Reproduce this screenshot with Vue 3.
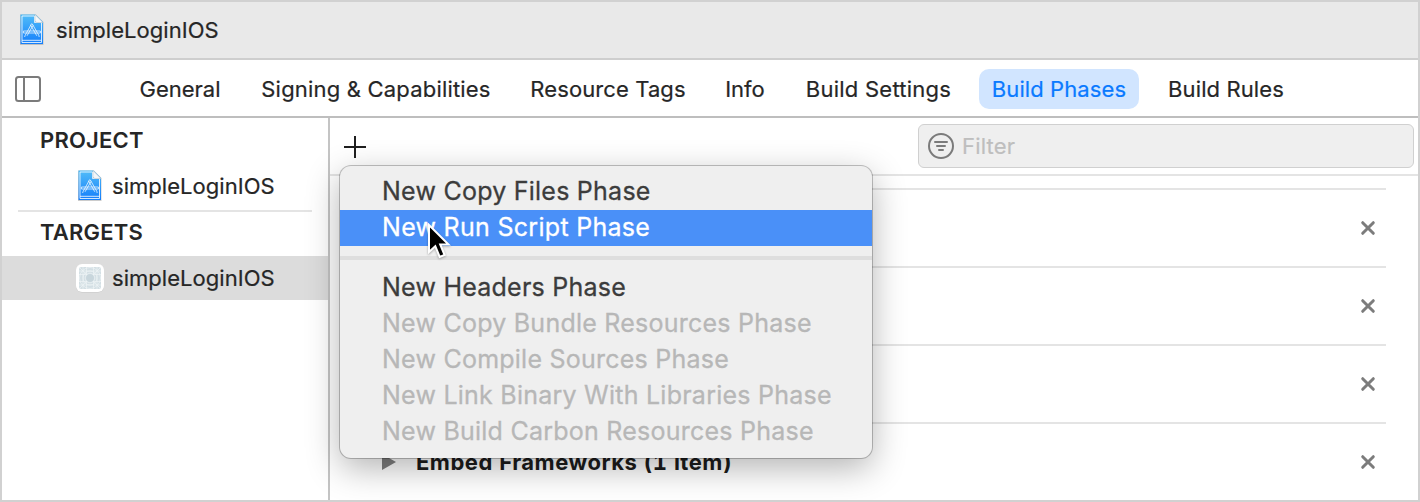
<script setup>
import { h } from 'vue'

const tabs = [
  { label: 'General', cls: 'plain' },
  { label: 'Signing & Capabilities', cls: 'wide' },
  { label: 'Resource Tags', cls: 'mid' },
  { label: 'Info', cls: 'plain' },
  { label: 'Build Settings', cls: 'wider' },
  { label: 'Build Phases', cls: 'mid active' },
  { label: 'Build Rules', cls: 'mid' },
]

const firstGroup = [
  { label: 'New Copy Files Phase', cls: '' },
  { label: 'New Run Script Phase', cls: 'selected' },
]
const secondGroup = [
  { label: 'New Headers Phase', cls: '' },
  { label: 'New Copy Bundle Resources Phase', cls: 'disabled' },
  { label: 'New Compile Sources Phase', cls: 'disabled' },
  { label: 'New Link Binary With Libraries Phase', cls: 'disabled' },
  { label: 'New Build Carbon Resources Phase', cls: 'disabled' },
]

const phases = ['', '', '', 'Embed Frameworks (1 item)']

const stroke = (d, width, opacity) =>
  h('path', { d, fill: 'none', stroke: '#fff', 'stroke-width': width, 'stroke-opacity': opacity })

const ProjectIcon = () =>
  h('svg', { width: 26, height: 34, viewBox: '0 0 26 34' }, [
    h('defs', [
      h('linearGradient', { id: 'doc', x1: 0, y1: 0, x2: 0, y2: 1 }, [
        h('stop', { offset: '0', 'stop-color': '#52bdf8' }),
        h('stop', { offset: '1', 'stop-color': '#147efb' }),
      ]),
    ]),
    h('path', { d: 'M1 1.5H17L24.5 9V32H1Z', fill: '#8e8e8e', opacity: 0.45 }),
    h('path', { d: 'M1.5 1.5H16.5L24 9V31H1.5Z', fill: 'url(#doc)' }),
    stroke('M3 3H15.5V9.5H22.5V29.5H3Z', 1, 0.8),
    stroke('M3 27.3H22.5', 1, 0.8),
    h('path', { d: 'M16 1.5L24 9.5H18Q16 9.5 16 7.5Z', fill: '#f4f6f8', stroke: '#b5bcc2', 'stroke-width': 0.5 }),
    stroke('M12.2 11.5L6.2 22.3L5.6 24M14 12.5L8 22.8M11.6 12L17.8 22.8M13.6 11.5L19.8 22.3L20.2 24M4.4 18H21.4M4.4 20H21.4M4.4 18V20M21.4 18V20M11.4 12Q12.9 9.4 14.2 12', 0.9, 0.8),
  ])
</script>

<template>
  <div class="window">
    <header class="titlebar">
      <ProjectIcon />
      <span class="name">simpleLoginIOS</span>
    </header>

    <nav class="tabbar">
      <svg class="toggle" width="26" height="26" viewBox="0 0 26 26" fill="none" stroke="#7b7b7b" stroke-width="2">
        <rect x="1" y="1" width="24" height="24" rx="2.5" />
        <path d="M9 1V25" />
      </svg>
      <div class="tabs">
        <span v-for="t in tabs" :key="t.label" class="tab" :class="t.cls">{{ t.label }}</span>
      </div>
    </nav>

    <div class="body">
      <aside class="sidebar">
        <div class="heading">PROJECT</div>
        <div class="entry">
          <ProjectIcon />
          <span class="name">simpleLoginIOS</span>
        </div>
        <div class="rule"></div>
        <div class="heading targets">TARGETS</div>
        <div class="entry current">
          <svg class="appicon" width="30" height="30" viewBox="0 0 30 30">
            <rect x="1" y="1.6" width="28" height="28" rx="6" fill="#c6c6c6" />
            <rect x="1" y="1" width="28" height="28" rx="6" fill="#fff" />
            <rect x="4" y="4" width="22" height="22" rx="2.5" fill="#d3dfe4" />
            <g fill="none" stroke="#eef3f5" stroke-width="0.7">
              <circle cx="15" cy="15" r="10.5" />
              <circle cx="15" cy="15" r="7" />
              <circle cx="15" cy="15" r="4.8" />
              <path d="M4 8H26M4 11.5H26M4 18.5H26M4 22H26M8 4V26M11.5 4V26M18.5 4V26M22 4V26M4 4L26 26M26 4L4 26" />
            </g>
            <circle cx="15" cy="15" r="4" fill="#c8d6dc" />
          </svg>
          <span class="name">simpleLoginIOS</span>
        </div>
      </aside>

      <main class="editor">
        <div class="toolbar">
          <svg width="22" height="22" viewBox="0 0 22 22" stroke="#1f1f1f" stroke-width="2">
            <path d="M11 0V22M0 11H22" />
          </svg>
          <div class="filter">
            <svg width="26" height="26" viewBox="0 0 26 26" fill="none" stroke="#7b7b7b" stroke-width="2" stroke-linecap="round">
              <circle cx="13" cy="13" r="12" />
              <path d="M7 9H19M9 13H17M11 17H15" />
            </svg>
            <span>Filter</span>
          </div>
        </div>
        <section v-for="(p, i) in phases" :key="i" class="phase">
          <template v-if="p">
            <svg class="arrow" width="14" height="16" viewBox="0 0 14 16"><path d="M0 0L14 8L0 16Z" fill="#7f7f7f" /></svg>
            <b>{{ p }}</b>
          </template>
          <svg class="close" width="16" height="16" viewBox="0 0 16 16" stroke="#7c7c7c" stroke-width="3" stroke-linecap="round">
            <path d="M2.7 2.7L13.3 13.3M13.3 2.7L2.7 13.3" />
          </svg>
        </section>
      </main>
    </div>

    <div class="menu">
      <div v-for="m in firstGroup" :key="m.label" class="item" :class="m.cls">{{ m.label }}</div>
      <div class="separator"></div>
      <div v-for="m in secondGroup" :key="m.label" class="item" :class="m.cls">{{ m.label }}</div>
    </div>

    <svg class="cursor" width="26" height="38" viewBox="0 0 26 38">
      <path d="M2 2V29L8.3 23.2L12.7 34L17.6 32L13.2 21.5H21.5Z" fill="#000" stroke="#fff" stroke-width="2" stroke-linejoin="miter" />
    </svg>
  </div>
</template>

<style>
body { margin: 0; background: #fff; }
</style>

<style scoped>
.window {
  position: relative;
  box-sizing: border-box;
  width: 1420px;
  height: 502px;
  overflow: hidden;
  display: flex;
  flex-direction: column;
  border: 2px solid #d1d1d1;
  background: #fff;
  color: #262626;
  font-family: Inter, "Liberation Sans", sans-serif;
  font-size: 22px;
  line-height: 26px;
  white-space: nowrap;
  -webkit-text-stroke: 0.2px currentColor;
}
svg { display: block; flex: none; }
.name { letter-spacing: 0.04px; }
.titlebar {
  height: 56px;
  flex: none;
  display: flex;
  align-items: center;
  gap: 11px;
  padding-left: 17px;
  background: #e9e9e9;
  border-bottom: 2px solid #cecece;
}
.tabbar {
  height: 56px;
  flex: none;
  display: flex;
  align-items: center;
  border-bottom: 2px solid #bebebe;
}
.toggle { margin: 2px 85px 0 13px; }
.tabs {
  display: grid;
  grid-template-columns: 108px 256px 180px 66px 173px 160px 146px;
  gap: 14px;
  margin-top: 2px;
}
.tab { height: 40px; line-height: 40px; border-radius: 10px; text-align: center; }
.wide { letter-spacing: 0.19px; }
.mid { letter-spacing: 0.1px; }
.wider { letter-spacing: 0.24px; }
.active { background: #d1e5ff; color: #0a7aff; }
.body { flex: 1; min-height: 0; display: flex; }
.sidebar { width: 326px; flex: none; border-right: 2px solid #c4c4c4; }
.heading {
  height: 44px;
  line-height: 44px;
  padding-left: 38px;
  font-weight: 600;
  letter-spacing: 0.2px;
  -webkit-text-stroke: 0;
}
.entry { height: 44px; display: flex; align-items: center; gap: 9px; padding-left: 75px; margin-top: 2px; }
.rule { height: 2px; margin: 2px 16px 0; background: #e4e4e4; }
.targets { margin-top: -2px; }
.current { background: #dcdcdc; padding-left: 73px; gap: 7px; }
.editor { flex: 1; min-width: 0; }
.toolbar {
  box-sizing: border-box;
  height: 58px;
  display: flex;
  align-items: center;
  justify-content: space-between;
  padding: 0 4px 0 14px;
  margin-bottom: 12px;
  border-bottom: 2px solid #e4e4e4;
}
.toolbar > svg { margin-top: 2px; }
.filter {
  box-sizing: border-box;
  width: 496px;
  height: 44px;
  display: flex;
  align-items: center;
  gap: 7px;
  padding-left: 9px;
  border: 1px solid #d0d0d0;
  border-radius: 6px;
  background: #efefef;
  color: #bebebe;
}
.filter span { letter-spacing: 0.2px; margin-left: 1px; }
.phase {
  height: 76px;
  display: flex;
  align-items: center;
  margin: 0 32px;
  padding-left: 20px;
  border-top: 2px solid #e4e4e4;
}
.phase b {
  font-weight: 700;
  letter-spacing: 0.5px;
  font-feature-settings: "tnum";
  color: #1c1c1c;
  -webkit-text-stroke: 0;
}
.arrow { margin-right: 20px; }
.close { margin-left: auto; margin-right: 10px; }
.menu {
  position: absolute;
  left: 338px;
  top: 164px;
  box-sizing: border-box;
  width: 532px;
  height: 292px;
  padding: 8px 0;
  border-radius: 11px;
  background: #efefef;
  box-shadow: 0 0 0 1px rgba(0, 0, 0, 0.23), 0 10px 34px rgba(0, 0, 0, 0.3);
}
.item {
  box-sizing: border-box;
  height: 36px;
  line-height: 34px;
  padding-left: 42px;
  font-size: 25px;
  letter-spacing: 0.24px;
  color: #3c3c3c;
  -webkit-text-stroke: 0.3px currentColor;
}
.selected { background: #4a90f8; color: #fff; letter-spacing: 0.29px; }
.disabled { color: #b7b7b7; }
.separator { height: 4px; margin: 10px 0; background: #dedede; }
.cursor { position: absolute; left: 425px; top: 221px; filter: drop-shadow(0 1px 1px rgba(0, 0, 0, 0.3)); }
</style>
